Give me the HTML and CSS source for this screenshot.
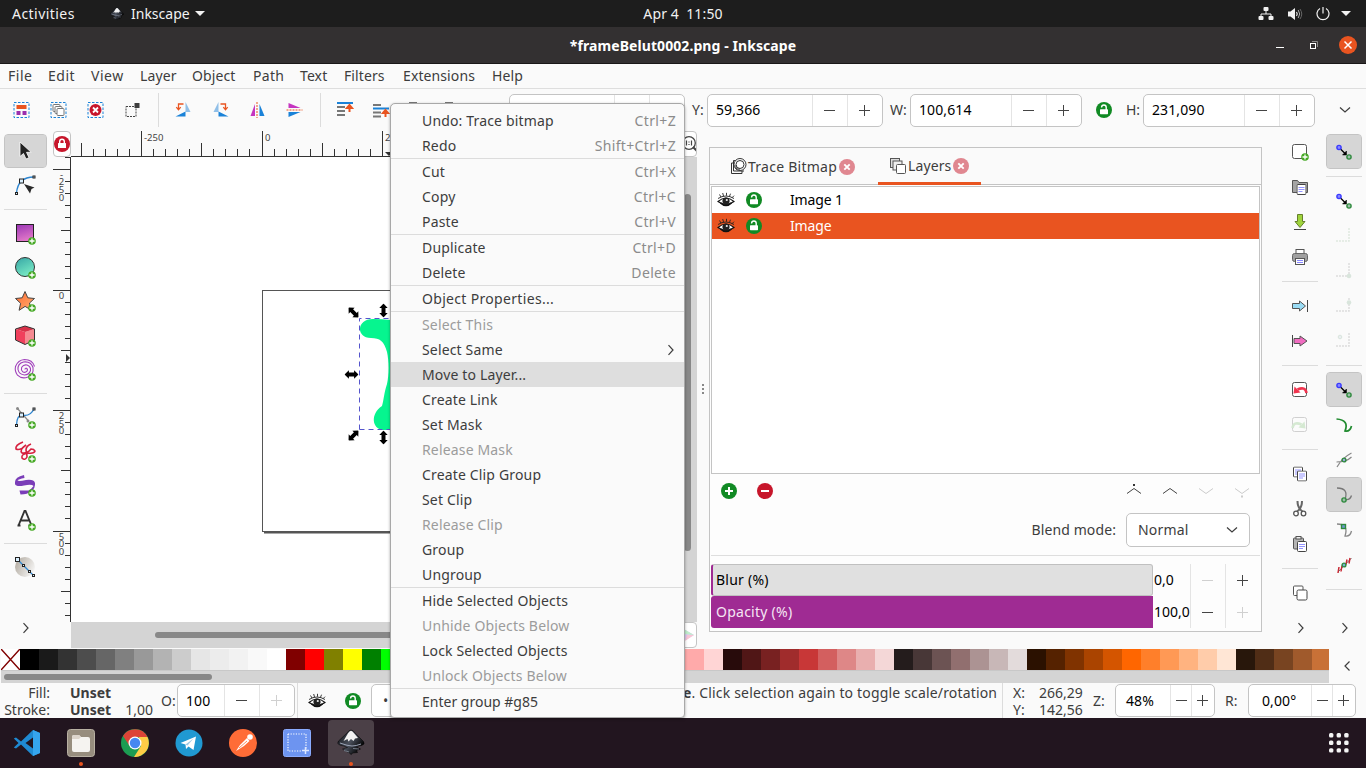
FILE: index.html
```
<!DOCTYPE html>
<html lang="en">
<head>
<meta charset="utf-8">
<title>*frameBelut0002.png - Inkscape</title>
<link rel="stylesheet" href="styles.css">
</head>
<body>
<svg class="defs" width="0" height="0">
  <defs>
    <linearGradient id="g-rect" x1="0" y1="0" x2="0.3" y2="1"><stop offset="0" stop-color="#9a35b5"/><stop offset="1" stop-color="#e077c8"/></linearGradient>
    <linearGradient id="g-circ" x1="0" y1="0" x2="0.5" y2="1"><stop offset="0" stop-color="#35a5a5"/><stop offset="1" stop-color="#77e8c4"/></linearGradient>
    <linearGradient id="g-star" x1="0" y1="0" x2="1" y2="1"><stop offset="0" stop-color="#ff6a33"/><stop offset="1" stop-color="#ffb070"/></linearGradient>
    <linearGradient id="g-grad" x1="0" y1="0.3" x2="1" y2="0.8"><stop offset="0" stop-color="#b5aea4"/><stop offset="1" stop-color="#fafafa"/></linearGradient>
    <linearGradient id="g-ink" x1="0" y1="0" x2="1" y2="0.6"><stop offset="0.1" stop-color="#15171c"/><stop offset="0.55" stop-color="#4a505c"/><stop offset="1" stop-color="#000"/></linearGradient>
    <symbol id="plus" viewBox="0 0 8 8"><circle cx="4" cy="4" r="3.8" fill="#45a824"/><path d="M4 1.5v5M1.5 4h5" stroke="#fff" stroke-width="1.3"/></symbol>
    <symbol id="lock-open" viewBox="0 0 16 16"><circle cx="8" cy="8" r="8" fill="#118a24"/><rect x="4" y="7.2" width="8" height="5" rx=".6" fill="#fff"/><path d="M5.6 5.6V5.3a2.3 2.3 0 0 1 4.6 0V8" fill="none" stroke="#fff" stroke-width="1.4"/></symbol>
    <symbol id="eye" viewBox="0 0 18 16"><path d="M1 9.5Q9 2.5 17 9.5Q9 15.5 1 9.5Z" fill="#fff" stroke="#111" stroke-width="1.1"/><circle cx="9" cy="9" r="3.6" fill="#222"/><circle cx="9.8" cy="8" r="1.1" fill="#eee"/><path d="M1 6.5Q9 1.5 17 6.5M4 5L2.5 2.5M6.5 4L5.7 1M9.5 3.7V.8M12.5 4.3l1-2.6M15 5.7l2-2" fill="none" stroke="#222" stroke-width=".9"/><path d="M3.5 10.8Q9 16 14.5 10.8" fill="none" stroke="#111" stroke-width="1.6"/></symbol>
    <symbol id="chev-r" viewBox="0 0 8 12"><path d="M1.5 1.2L6 6l-4.5 4.8" fill="none" stroke="#3d3d3d" stroke-width="1.2"/></symbol>
    <symbol id="chev-d" viewBox="0 0 12 8"><path d="M1 1.5L6 6l5-4.5" fill="none" stroke="#3d3d3d" stroke-width="1.2"/></symbol>
    <symbol id="snap" viewBox="0 0 18 18"><path d="M5.5 6l4.500 4.500" stroke="#000" stroke-width="1.200"/><path d="M11.500 8v4H7.500z" fill="#000" stroke="#000" stroke-width=".5"/><circle cx="4" cy="4.500" r="2.100" fill="#88f" stroke="#3a3aff" stroke-width="1.400"/><circle cx="14" cy="14" r="2.100" fill="#9cbfa8" stroke="#2f8a3e" stroke-width="1.400"/></symbol>
    <symbol id="doc" viewBox="0 0 18 18"><rect x="1.5" y="1.5" width="14" height="14" rx="2" fill="#fff" stroke="#555"/></symbol>
    <symbol id="page" viewBox="0 0 10 11"><rect x=".5" y=".5" width="9" height="10" rx="1" fill="#fff" stroke="#444"/><path d="M2 3.5h6M2 5.5h6M2 7.5h4" stroke="#88f" stroke-width=".9"/></symbol>
    <symbol id="handle" viewBox="-7 -7 14 14"><path d="M-7 0L-2.6-4.2V-2H2.6V-4.2L7 0 2.6 4.2V2H-2.6V4.2Z"/></symbol>
    <symbol id="inkscape" viewBox="0 0 28 28"><path d="M14 1q2 0 4 3l8.500 8.500q2 3-2 4-5 0-4 2l3 1.500-4 1.500 1 2-5 .5q-1 3-3 0l-3-1.500-4-2.500 5-1.500q-4-2-8-2.500-3-1.500-1-4L10 4q2-3 4-3z" fill="url(#g-ink)" stroke="#000" stroke-width=".5"/><path d="M14 1.800q1.500 0 3 2.500l4 4.700-3 .5-1.500 2.500-2.500-2-2.500 2.500-1-2.500-4 2L11 4.300q1.500-2.500 3-2.500z" fill="#f2f2f2"/><path d="M3 14q8 3 12 3t9-2" fill="none" stroke="#9aa3b5" stroke-width="1"/><path d="M7 21.500l5 1.500M16 19.500l6 .5" stroke="#8890a0" stroke-width=".8"/></symbol>
    <symbol id="close-x" viewBox="0 0 16 16"><circle cx="8" cy="8" r="8" fill="#e08790"/><path d="M5.300 5.300l5.400 5.400M10.700 5.300l-5.400 5.400" stroke="#fff" stroke-width="1.900"/></symbol>
  </defs>
</svg>

<header class="topbar">
  <span class="activities">Activities</span>
  <span class="app-menu"><svg width="14" height="14"><use href="#inkscape"/></svg><span>Inkscape</span><i class="tri"></i></span>
  <span class="clock">Apr 4&ensp;11:50</span>
  <span class="tray">
    <svg width="16" height="14" viewBox="0 0 16 14"><path d="M8 4v3M3 10V7h10v3" fill="none" stroke="#f2f2f2"/><rect x="5.500" y="0" width="5" height="4" rx="1" fill="#f2f2f2"/><rect x=".5" y="9" width="5" height="4" rx="1" fill="#f2f2f2"/><rect x="10.500" y="9" width="5" height="4" rx="1" fill="#f2f2f2"/></svg>
    <svg width="16" height="14" viewBox="0 0 16 14"><path d="M1 4.500h2.500L8 1v12L3.500 9.500H1z" fill="#f2f2f2"/><path d="M9.500 5q1.500 2 0 4" fill="none" stroke="#f2f2f2" stroke-width="1.200"/><path d="M11.200 3q3 4 0 8" fill="none" stroke="#aaa"/><path d="M13 2q3.500 5 0 10" fill="none" stroke="#666"/></svg>
    <svg width="14" height="14" viewBox="0 0 14 14"><path d="M4 1.500a6 6 0 1 0 6 0M7 0v6.500" fill="none" stroke="#f2f2f2" stroke-width="1.200"/></svg>
    <i class="tri"></i>
  </span>
</header>

<div class="titlebar">
  <b>*frameBelut0002.png - Inkscape</b>
  <span class="winbtns">
    <svg width="8" height="10" viewBox="0 0 8 10"><path d="M0 7.500h8" stroke="#fff"/></svg>
    <svg width="8" height="8" viewBox="0 0 8 8"><path d="M2 .5h5.500V6" fill="none" stroke="#8a8888"/><rect x=".5" y="2.500" width="5" height="5" fill="none" stroke="#fff"/></svg>
    <svg width="18" height="18" viewBox="0 0 18 18"><circle cx="9" cy="9" r="9" fill="#e95420"/><path d="M5.500 5.500l7 7M12.500 5.500l-7 7" stroke="#fff" stroke-width="1.500"/></svg>
  </span>
</div>

<nav class="menubar"><span class="m1">File</span><span class="m2">Edit</span><span class="m3">View</span><span class="m4">Layer</span><span class="m5">Object</span><span class="m6">Path</span><span class="m7">Text</span><span class="m8">Filters</span><span class="m9">Extensions</span><span class="m10">Help</span></nav>

<div class="toolbar">
  <div class="tgroup">
    <svg viewBox="0 0 16 16"><rect x=".5" y=".5" width="15" height="15" fill="none" stroke="#1a82d8" stroke-dasharray="2.500 1.500"/><rect x="3" y="3" width="10" height="4" fill="#e95420"/><rect x="3" y="9" width="4" height="4" fill="#9b2fae"/><rect x="9" y="9" width="4" height="4" fill="#9b2fae"/></svg>
    <svg viewBox="0 0 16 16"><rect x=".5" y=".5" width="15" height="15" fill="none" stroke="#1a82d8" stroke-dasharray="2.500 1.500"/><g fill="#fff" stroke="#777"><rect x="2.500" y="2.500" width="7" height="7" rx="1"/><rect x="4.500" y="4.500" width="7" height="7" rx="1"/><rect x="6.500" y="6.500" width="7" height="7" rx="1"/></g></svg>
    <svg viewBox="0 0 16 16"><rect x=".5" y=".5" width="15" height="15" fill="none" stroke="#1a82d8" stroke-dasharray="2.500 1.500"/><circle cx="8" cy="8" r="6" fill="#c7162b"/><path d="M5.500 5.500l5 5M10.500 5.500l-5 5" stroke="#fff" stroke-width="1.800"/></svg>
    <svg viewBox="0 0 16 16"><rect x="1.500" y="4.500" width="10" height="10" fill="none" stroke="#444" stroke-dasharray="2 1"/><rect x="10" y="1" width="5" height="5" fill="#3d3d3d"/></svg>
  </div>
  <i class="vsep"></i>
  <div class="tgroup">
    <svg viewBox="0 0 16 16"><path d="M10 0l5 10h-5z" fill="#90bfe8"/><path d="M0 14.500h10v-5z" fill="#1a82d8"/><path d="M8 2H3v5M.8 5.200L3 7.800l2.200-2.600" fill="none" stroke="#e95420" stroke-width="1.300"/></svg>
    <svg viewBox="0 0 16 16"><path d="M6 0L1 10h5z" fill="#90bfe8"/><path d="M16 14.500H6v-5z" fill="#1a82d8"/><path d="M8 2h5v5M10.800 5.200L13 7.800l2.200-2.600" fill="none" stroke="#e95420" stroke-width="1.300"/></svg>
    <svg viewBox="0 0 16 16"><path d="M5.500 2v12H1z" fill="#c535c0"/><path d="M10 2v12h5z" fill="#1a82d8"/><path d="M7.500 0v16" stroke="#e95420" stroke-dasharray="2 1"/></svg>
    <svg viewBox="0 0 16 16"><path d="M2 1v5h12z" fill="#c535c0"/><path d="M2 15v-5h12z" fill="#1a82d8"/><path d="M0 8h16" stroke="#e95420" stroke-dasharray="2 1"/></svg>
  </div>
  <i class="vsep"></i>
  <div class="tgroup narrow">
    <svg viewBox="0 0 16 16"><path d="M0 1h16" stroke="#1a82d8" stroke-width="2"/><path d="M0 5h8M0 9h8M0 13h8" stroke="#777" stroke-width="1.800"/><path d="M12.500 10V3.500M10 6l2.500-3L15 6z" fill="#e95420" stroke="#e95420" stroke-width="2"/></svg>
    <svg viewBox="0 0 16 16"><path d="M0 6.500h16" stroke="#1a82d8" stroke-width="2"/><path d="M0 3h8M0 10.500h8M0 14.500h8" stroke="#777" stroke-width="1.800"/><path d="M12.500 15V9M10 11l2.500-3L15 11z" fill="#e95420" stroke="#e95420" stroke-width="2"/></svg>
    <svg viewBox="0 0 16 16"><path d="M0 1h8M0 5h8" stroke="#777" stroke-width="1.800"/><path d="M12.500 1v8" stroke="#e95420" stroke-width="2"/></svg>
    <svg viewBox="0 0 16 16"><path d="M0 1h8M0 5h8" stroke="#777" stroke-width="1.800"/><path d="M0 14h16" stroke="#1a82d8" stroke-width="2"/></svg>
  </div>
  <div class="spin wide x"><span></span><i class="minus"></i><i class="plus"></i></div>
  <label class="ly">Y:</label>
  <div class="spin wide"><span>59,366</span><i class="minus"></i><i class="plus"></i></div>
  <label class="lw">W:</label>
  <div class="spin"><span>100,614</span><i class="minus"></i><i class="plus"></i></div>
  <svg class="lk" width="16" height="16"><use href="#lock-open"/></svg>
  <label class="lh">H:</label>
  <div class="spin"><span>231,090</span><i class="minus"></i><i class="plus"></i></div>
  <svg class="more" width="12" height="8"><use href="#chev-d"/></svg>
</div>

<main class="work">
  <div class="col tools">
    <div class="cell on"><svg viewBox="0 0 24 24"><path d="M7 3v14.500l3.500-3 2.500 5.500 3-1.300-2.500-5.400h4.700z" fill="#222" stroke="#fff" stroke-width=".8"/></svg></div>
    <div class="cell"><svg viewBox="0 0 24 24"><path d="M3.500 20Q5 4 21 4" fill="none" stroke="#2f86d0" stroke-width="1.300"/><path d="M11 11l10.500 3.500-3 1.500-1.500 4.500z" fill="#2a2a2a"/><g fill="#d8efff" stroke="#222"><rect x="6.500" y="6" width="4" height="4"/><rect x="20" y="3" width="2" height="2"/><rect x="2.500" y="19.500" width="2" height="2"/></g></svg></div>
    <i class="hsep"></i>
    <div class="cell"><svg viewBox="0 0 24 24"><rect x="3.500" y="3.500" width="17" height="17" fill="url(#g-rect)" stroke="#222"/><use href="#plus" x="15" y="16" width="8" height="8"/></svg></div>
    <div class="cell"><svg viewBox="0 0 24 24"><circle cx="12" cy="12" r="9.500" fill="url(#g-circ)" stroke="#333"/><use href="#plus" x="15" y="16" width="8" height="8"/></svg></div>
    <div class="cell"><svg viewBox="0 0 24 24"><path d="M12 2.500l2.800 6.300 6.700.7-5 4.500 1.600 7-6-3.600-6 3.900 1.500-7-5.100-4.800 6.700-.7z" fill="url(#g-star)" stroke="#444"/><use href="#plus" x="15" y="15" width="8" height="8"/></svg></div>
    <div class="cell"><svg viewBox="0 0 24 24"><path d="M2.500 6L12 9v12.500L2.500 17z" fill="#f0405c"/><path d="M12 9l9.500-3v11L12 21.500z" fill="#f58a92"/><path d="M2.500 6L12 3l9.500 3L12 9z" fill="#d83048"/><path d="M2.500 6L12 3l9.500 3v11L12 21.500 2.500 17z" fill="none" stroke="#333"/><use href="#plus" x="15" y="16" width="8" height="8"/></svg></div>
    <div class="cell"><svg viewBox="0 0 24 24"><path d="M12 12.500q0-1.700 1.500-1.200 1.600 1 .5 2.900-2 2-4.300.5-2-2-1-4.500 2-3 5.300-2.200 4 1.500 3.500 5.500-1.500 4.500-6 4.500-5.500-.5-6.500-5.500Q4.500 6.500 10.500 5q7.500-1 9.500 5.500 1 7-5 9.500-6 2.500-10.500-1.800Q1.500 14 2.500 9.500 5 3 11.500 2.500q8 0 10 7" fill="none" stroke="#a040bb" stroke-width="1.100"/><use href="#plus" x="15" y="16" width="8" height="8"/></svg></div>
    <i class="hsep"></i>
    <div class="cell"><svg viewBox="0 0 24 24"><path d="M4.500 3.500l11 12.500" stroke="#888" stroke-width="1.200"/><circle cx="4.500" cy="3.500" r="1.500" fill="#888"/><circle cx="15" cy="16" r="1.500" fill="#888"/><path d="M3.500 20Q4 10 9 10q8 2 12-6" fill="none" stroke="#2f86d0" stroke-width="1.300"/><g fill="#d8efff" stroke="#222"><rect x="6.500" y="8" width="4" height="4"/><rect x="20" y="3" width="2" height="2"/><rect x="2.500" y="19.500" width="2" height="2"/></g><use href="#plus" x="15" y="16" width="8" height="8"/></svg></div>
    <div class="cell"><svg viewBox="0 0 24 24"><path d="M10 3Q2 6 3 10q4 2 10-4-7 5-4 8 5 1 9-4 3 0 4 2-1 3-7 2-7 1-6 5 3 3 5-1 0-3-1-7 0-4 5-6" fill="none" stroke="#d6213f" stroke-width="1.600"/><use href="#plus" x="15" y="16" width="8" height="8"/></svg></div>
    <div class="cell"><svg viewBox="0 0 24 24"><path d="M11 2Q2 4 2 9v2q1 3 9 1.500 8-1.500 9.500.5-2 3-5 4.500H6.500l1 4q7 0 11-3.500 4-3 3.500-8-1-4-9-3-7 1.500-8.500.5 1-1.500 7-2.500z" fill="#7a3db8"/><use href="#plus" x="15" y="16" width="8" height="8"/></svg></div>
    <div class="cell"><svg viewBox="0 0 24 24"><path d="M5.500 18.500L11.500 4h1l6 14.500M8 13.500h8M4.500 18.500h3M15.500 18.500h4" fill="none" stroke="#333" stroke-width="1.900"/><use href="#plus" x="15" y="16" width="8" height="8"/></svg></div>
    <i class="hsep"></i>
    <div class="cell"><svg viewBox="0 0 24 24"><circle cx="12" cy="12" r="10" fill="url(#g-grad)"/><path d="M4.500 4.500l16 16" stroke="#2f86d0" stroke-width="1.300"/><g fill="#d8efff" stroke="#222"><rect x="2.500" y="2.500" width="4" height="4"/><rect x="9.500" y="9.500" width="2" height="2"/><rect x="15.500" y="15.500" width="2" height="2"/><rect x="19.500" y="19.500" width="2" height="2"/></g></svg></div>
    <svg class="end" width="8" height="12"><use href="#chev-r"/></svg>
  </div>

  <section class="canvas">
    <div class="corner tl"><svg width="16" height="16" viewBox="0 0 16 16"><circle cx="8" cy="8" r="8" fill="#c7162b"/><rect x="4" y="7" width="8" height="5" rx=".6" fill="#fff"/><path d="M5.700 8V5.500a2.300 2.300 0 0 1 4.600 0V8" fill="none" stroke="#fff" stroke-width="1.400"/></svg></div>
    <svg class="hruler" width="609" height="26" viewBox="71 131 609 26"><g id="hticks" fill="#333"></g><path d="M71 156.500h609" stroke="#333"/><text x="144" y="141">-250</text><text x="265" y="141">0</text><text x="385" y="141">250</text><path d="M385 152h8l-4 4z" fill="#333"/></svg>
    <div class="corner"><svg width="18" height="20" viewBox="0 0 18 20"><circle cx="9" cy="9" r="6.300" fill="#fff" stroke="#444" stroke-width="1.300"/><path d="M6.500 6.500v5M11.500 6.500v5M9 7.500v1M9 10v1" stroke="#444" stroke-width="1.200"/><path d="M13 13l4 4" stroke="#444" stroke-width="2"/></svg></div>
    <svg class="vruler" width="18" height="465" viewBox="53 157 18 465"><g id="vticks" fill="#333"></g><path d="M70.500 157v465" stroke="#333"/><g text-anchor="middle"><text x="61.500" y="178">-</text><text x="61.500" y="185">2</text><text x="61.500" y="193">5</text><text x="61.500" y="201">0</text><text x="61.500" y="299">0</text><text x="61.500" y="419">2</text><text x="61.500" y="427">5</text><text x="61.500" y="434">0</text><text x="61.500" y="540">5</text><text x="61.500" y="547">0</text><text x="61.500" y="555">0</text></g><path d="M66 354v8l4-4z" fill="#333"/></svg>
    <svg class="sheet" width="609" height="465" viewBox="71 157 609 465">
      <rect x="71" y="157" width="609" height="465" fill="#fff"/>
      <path d="M264 532.500h400" stroke="#555" stroke-width="2"/><rect x="262.500" y="290.500" width="400" height="241" fill="#fff" stroke="#555"/>
      <path d="M373 319c-17 0-17 19-2 19 9 0 13 3 16 14 2 9 2 23 0 32-3 9-3 15-5 22-12 8-10 23 1 24h27V323q-20-4-37-4z" fill="#06f58f"/>
      <path d="M359.500 429.500v-111H400M359.500 429.500H400" fill="none" stroke="#5555cc" stroke-dasharray="5 4"/>
      <g fill="#000"><use href="#handle" x="-7" y="-7" width="14" height="14" transform="translate(353.500 312.500) rotate(45)"/><use href="#handle" x="-7" y="-7" width="14" height="14" transform="translate(383.500 310.500) rotate(90)"/><use href="#handle" x="-7" y="-7" width="14" height="14" transform="translate(351.500 374.500)"/><use href="#handle" x="-7" y="-7" width="14" height="14" transform="translate(353.500 435.500) rotate(-45)"/><use href="#handle" x="-7" y="-7" width="14" height="14" transform="translate(383.500 437.500) rotate(90)"/></g>
    </svg>
    <div class="vscroll"><i></i></div>
    <div></div>
    <div class="hscroll"><i></i></div>
    <div class="corner br"><svg width="16" height="18" viewBox="0 0 16 18"><path d="M1 2l12 7-12 7z" fill="#dcc8f5"/><path d="M1 2l12 7-10-1z" fill="#bfeecb"/><path d="M13 9L4 15l2-6z" fill="#f8c5d5"/></svg></div>
  </section>

  <div class="grip"><i></i><i></i><i></i></div>

  <section class="panel">
    <div class="tabs">
      <span class="tab t1"><svg width="17" height="17" viewBox="0 0 17 17"><path d="M4 5H1.500v10.500H12V13M6 2.500H3.500v10.500H14" fill="none" stroke="#333"/><circle cx="10" cy="6.500" r="6" fill="#fff" stroke="#333"/><circle cx="10" cy="6.500" r="4" fill="#fff" stroke="#333"/><path d="M6 7v4h4" fill="none" stroke="#333"/></svg><span>Trace Bitmap</span><svg width="16" height="16"><use href="#close-x"/></svg></span>
      <span class="tab t2"><svg width="17" height="17" viewBox="0 0 17 17"><g stroke="#555"><rect x=".5" y=".5" width="9" height="9" fill="#ddd"/><rect x="3" y="3" width="9" height="9" fill="#eee"/><rect x="6.500" y="6.500" width="9" height="9" rx="1" fill="#fff"/></g></svg><span>Layers</span><svg width="16" height="16"><use href="#close-x"/></svg></span>
    </div>
    <div class="list">
      <div class="row"><svg width="18" height="16"><use href="#eye"/></svg><svg width="16" height="16"><use href="#lock-open"/></svg><span>Image 1</span></div>
      <div class="row sel"><svg width="18" height="16"><use href="#eye"/></svg><svg width="16" height="16"><use href="#lock-open"/></svg><span>Image</span></div>
    </div>
    <div class="actions">
      <svg width="16" height="16" viewBox="0 0 16 16"><circle cx="8" cy="8" r="8" fill="#118a24"/><path d="M8 4v8M4 8h8" stroke="#fff" stroke-width="2"/></svg>
      <svg width="16" height="16" viewBox="0 0 16 16"><circle cx="8" cy="8" r="8" fill="#c7162b"/><path d="M4 8h8" stroke="#fff" stroke-width="2"/></svg>
      <svg class="first" width="16" height="16" viewBox="0 0 16 16"><path d="M1 10.500l7-5 7 5" fill="none" stroke="#444"/><rect x="7" y="1" width="2" height="2" fill="#333"/></svg>
      <svg width="16" height="16" viewBox="0 0 16 16"><path d="M1 10.500l7-5 7 5" fill="none" stroke="#444"/></svg>
      <svg width="16" height="16" viewBox="0 0 16 16"><path d="M1 5.500l7 5 7-5" fill="none" stroke="#ccc"/></svg>
      <svg width="16" height="16" viewBox="0 0 16 16"><path d="M1 5.500l7 5 7-5" fill="none" stroke="#ccc"/><rect x="7" y="12.500" width="2" height="2" fill="#ccc"/></svg>
    </div>
    <div class="blend"><label>Blend mode:</label><div class="combo"><span>Normal</span><svg width="12" height="8"><use href="#chev-d"/></svg></div></div>
    <div class="sliders">
      <div class="slide"><div class="bar blur">Blur (%)</div><span>0,0</span><i class="minus off"></i><i class="plus"></i></div>
      <div class="slide"><div class="bar full">Opacity (%)</div><span>100,0</span><i class="minus"></i><i class="plus off"></i></div>
    </div>
  </section>

  <div class="col cmds">
    <div class="cell"><svg viewBox="0 0 18 18"><use href="#doc" width="18" height="18"/><use href="#plus" x="10" y="10" width="8" height="8"/></svg></div>
    <div class="cell"><svg viewBox="0 0 18 18"><path d="M1.500 14.500v-12h5l1.500 2h8.500v10z" fill="#a5a5a5" stroke="#555"/><use href="#page" x="5.500" y="6" width="10" height="11"/></svg></div>
    <div class="cell"><svg viewBox="0 0 18 18"><path d="M6.500 1.500h5v7h2.500L9 14.500 4 8.500h2.500z" fill="#9fd43c" stroke="#66802c"/><path d="M3 16.500h12" stroke="#444"/></svg></div>
    <div class="cell"><svg viewBox="0 0 18 18"><rect x="5" y="1.500" width="8" height="6" fill="#fff" stroke="#555"/><rect x="1.500" y="5.500" width="15" height="8" rx="2" fill="#a0a0a0" stroke="#666"/><rect x="4.500" y="10.500" width="9" height="6" fill="#fff" stroke="#555"/><path d="M6 12.500h6M6 14.500h6" stroke="#88f"/></svg></div>
    <i class="hsep"></i>
    <div class="cell"><svg viewBox="0 0 18 18"><path d="M1.500 6.500h7V4l6 5-6 5v-2.500h-7z" fill="#9adcf5" stroke="#555"/><path d="M16.500 3v12" stroke="#444"/></svg></div>
    <div class="cell"><svg viewBox="0 0 18 18"><path d="M3 6.500h6V4l7 5-7 5v-2.500H3z" fill="#f06cc0" stroke="#555"/><path d="M1.500 3v12" stroke="#444"/></svg></div>
    <i class="hsep"></i>
    <div class="cell"><svg viewBox="0 0 18 18"><use href="#doc" width="18" height="18"/><path d="M15.500 12q-1-7-9-3.500" fill="none" stroke="#f0344e" stroke-width="2.600"/><path d="M2.500 12.500l1-7 6 6z" fill="#f0344e"/></svg></div>
    <div class="cell faded"><svg viewBox="0 0 18 18"><use href="#doc" width="18" height="18"/><path d="M1.500 12q1-7 9-3.500" fill="none" stroke="#6cb860" stroke-width="2.600"/><path d="M14.500 12.500l-1-7-6 6z" fill="#6cb860"/></svg></div>
    <i class="hsep"></i>
    <div class="cell"><svg viewBox="0 0 18 18"><use href="#page" x="2" y="1.500" width="10" height="11"/><use href="#page" x="6" y="5.500" width="10" height="11"/></svg></div>
    <div class="cell"><svg viewBox="0 0 18 18"><path d="M6.500 1q0 7 5 10.500M11 1q0 7-5 10.500" fill="none" stroke="#666" stroke-width="2"/><circle cx="5" cy="13.500" r="2.300" fill="#fff" stroke="#555" stroke-width="1.300"/><circle cx="12.500" cy="13.500" r="2.300" fill="#fff" stroke="#555" stroke-width="1.300"/></svg></div>
    <div class="cell"><svg viewBox="0 0 18 18"><rect x="2.500" y="3" width="10" height="11" rx="1" fill="#b5b5b5" stroke="#555"/><rect x="5" y="1.500" width="5" height="2.500" fill="#eee" stroke="#555"/><use href="#page" x="6" y="6" width="10" height="11"/></svg></div>
    <i class="hsep"></i>
    <div class="cell"><svg viewBox="0 0 18 18"><rect x="2.500" y="2" width="9.500" height="9.500" rx="1" fill="#fff" stroke="#555"/><rect x="6" y="6" width="10" height="10" rx="1.500" fill="#fff" stroke="#444"/></svg></div>
    <svg class="end" width="8" height="12"><use href="#chev-r"/></svg>
  </div>

  <div class="col snaps">
    <div class="cell on"><svg><use href="#snap"/></svg></div>
    <i class="hsep"></i>
    <div class="cell"><svg><use href="#snap"/></svg></div>
    <div class="cell faded"><svg viewBox="0 0 18 18"><path d="M14 1v13H1" fill="none" stroke="#95b895" stroke-width="1.500" stroke-dasharray="2 1"/></svg></div>
    <div class="cell faded"><svg viewBox="0 0 18 18"><path d="M14 1v13H1" fill="none" stroke="#888" stroke-width="1.500" stroke-dasharray="2 1"/><circle cx="14" cy="14" r="2.300" fill="#79a987"/></svg></div>
    <div class="cell faded"><svg viewBox="0 0 18 18"><path d="M14 1v13H1" fill="none" stroke="#888" stroke-width="1.500" stroke-dasharray="2 1"/><circle cx="14" cy="5.500" r="2.300" fill="#79a987"/></svg></div>
    <div class="cell faded"><svg viewBox="0 0 18 18"><path d="M14 1v13H1" fill="none" stroke="#888" stroke-width="1.500" stroke-dasharray="2 1"/><circle cx="5" cy="5" r="1.800" fill="#bcd" stroke="#79a987"/></svg></div>
    <i class="hsep"></i>
    <div class="cell on"><svg><use href="#snap"/></svg></div>
    <div class="cell"><svg viewBox="0 0 18 18"><path d="M1.500 3q13 1 8.500 12 5 1 6.500-5" fill="none" stroke="#1f8a2e" stroke-width="1.700"/></svg></div>
    <div class="cell"><svg viewBox="0 0 18 18"><path d="M2 16Q7 7 16.500 2M1.500 11q10 0 15-5" fill="none" stroke="#888" stroke-width="1.200"/><circle cx="9" cy="9" r="1.900" fill="#9ad" stroke="#2f8a3e" stroke-width="1.400"/></svg></div>
    <div class="cell on"><svg viewBox="0 0 18 18"><path d="M2 2q12 0 8 11.500 5 1 6.500-4" fill="none" stroke="#777" stroke-width="1.300"/><circle cx="9" cy="14" r="2.100" fill="#9cbfa8" stroke="#2f8a3e" stroke-width="1.400"/></svg></div>
    <div class="cell"><svg viewBox="0 0 18 18"><path d="M2 3q12 0 8 12 5 1 6.500-5" fill="none" stroke="#888" stroke-width="1.300"/><rect x="6.500" y="3.500" width="4" height="4" fill="#6a9ad0" stroke="#2f8a3e" stroke-width="1.400"/></svg></div>
    <div class="cell"><svg viewBox="0 0 18 18"><path d="M3 16L16.500 2" stroke="#777"/><path d="M4 11l-1 6M7 9.500l-1 6M12 3.500l-1 5M15 2l-1 5.500" stroke="#c82a35" stroke-width="1.500"/><circle cx="9" cy="9" r="1.900" fill="#7ab0d8" stroke="#2f8a3e" stroke-width="1.400"/></svg></div>
    <i class="hsep"></i>
    <svg class="end" width="8" height="12"><use href="#chev-r"/></svg>
  </div>
</main>

<div class="palette">
  <div class="palwrap">
    <div class="swatches" id="swatches"><svg width="19" height="21" viewBox="0 0 19 21"><rect width="19" height="21" fill="#fff"/><path d="M0 0l19 21M19 0L0 21" stroke="#800000" stroke-width="1.500"/></svg></div>
    <div class="palscroll"><i></i></div>
  </div>
  <svg class="palchev" width="8" height="12" viewBox="0 0 8 12"><path d="M6.500 1.500L2 6l4.500 4.500" fill="none" stroke="#3d3d3d" stroke-width="1.200"/></svg>
</div>

<footer class="status">
  <div class="pair lab"><span>Fill:</span><span>Stroke:</span></div>
  <div class="pair val"><b>Unset</b><b>Unset</b></div>
  <div class="pair sw"><span>&nbsp;</span><span>1,00</span></div>
  <label class="lo">O:</label>
  <div class="spin so"><span>100</span><i class="minus"></i><i class="plus off"></i></div>
  <i class="ssep"></i>
  <svg class="seye" width="18" height="16"><use href="#eye"/></svg>
  <svg class="slock" width="16" height="16"><use href="#lock-open"/></svg>
  <div class="layersel">•</div>
  <div class="msg"><b>e</b>. Click selection again to toggle scale/rotation</div>
  <i class="ssep s2"></i>
  <div class="pair xy"><span>X:</span><span>Y:</span></div>
  <div class="pair xyv"><span>266,29</span><span>142,56</span></div>
  <label class="lz">Z:</label>
  <div class="spin sz"><span>48%</span><i class="minus"></i><i class="plus"></i></div>
  <label class="lr">R:</label>
  <div class="spin sr"><span>0,00°</span><i class="minus"></i><i class="plus"></i></div>
</footer>

<div class="dock">
  <div class="app"><svg viewBox="0 0 28 28"><path d="M20 1l7 3v20l-7 3L8 15.500 3 19.500.800 18.500 5.500 14 .8 9.500 3 8.500l5 4zM20 8.500L12.500 14l7.500 5.500z" fill="#1f8ad2" fill-rule="evenodd"/><path d="M20 1l7 3v20l-7 3z" fill="#35a5ee"/></svg></div>
  <div class="app run"><svg viewBox="0 0 28 28"><rect x=".5" y=".5" width="27" height="27" rx="3" fill="#978d7e" stroke="#b8b0a2"/><path d="M5 8q0-2 2-2h5l2 2h7q2 0 2 2v11q0 2-2 2H7q-2 0-2-2z" fill="#f5f3f0"/><path d="M5 8q0-2 2-2h5l2 2-2 2H5z" fill="#ddd5cc"/></svg></div>
  <div class="app"><svg viewBox="0 0 28 28"><circle cx="14" cy="14" r="14" fill="#1c9c52"/><path d="M2 7A14 14 0 0 1 26.500 8H14l-6 8z" fill="#dc4437"/><path d="M26.500 8A14 14 0 0 1 13 28l7-11-2-9z" fill="#ffcd46"/><circle cx="14" cy="14" r="6.500" fill="#fff"/><circle cx="14" cy="14" r="5.200" fill="#4688f1"/></svg></div>
  <div class="app"><svg viewBox="0 0 28 28"><circle cx="14" cy="14" r="13.500" fill="#2099d2"/><path d="M5.500 14L21 7.500 18.500 21l-5-3.500-2.500 2.500-.5-4.500z" fill="#fff"/><path d="M10.500 15.500l8-6-6 7z" fill="#9cc9e5"/></svg></div>
  <div class="app"><svg viewBox="0 0 28 28"><circle cx="14" cy="14" r="14" fill="#ff6c37"/><circle cx="21" cy="8" r="2.800" fill="#fff"/><path d="M18 9l2.500 3-5.500 5L7 22l4-6z" fill="#fff"/><path d="M10 19l8-7" stroke="#ff6c37" stroke-width=".8"/></svg></div>
  <div class="app"><svg viewBox="0 0 28 28"><rect x=".5" y=".5" width="27" height="27" rx="2" fill="#6d94f0" stroke="#8aabff"/><path d="M5 5h18v15M5 5v17h14" fill="none" stroke="#fff" stroke-width="1.200" stroke-dasharray="1.200 1.400"/><path d="M22.500 18v7M19 21.500h7" stroke="#dfe8ff" stroke-width="1.500"/></svg></div>
  <div class="app run active"><svg viewBox="0 0 28 28"><use href="#inkscape" width="28" height="28"/></svg></div>
  <svg class="grid" width="20" height="20" viewBox="0 0 20 20"><g fill="#f4f4f4"><rect x="0" y="0" width="4.400" height="4.400" rx="1.500"/><rect x="7.600" y="0" width="4.400" height="4.400" rx="1.500"/><rect x="15.200" y="0" width="4.400" height="4.400" rx="1.500"/><rect x="0" y="7.600" width="4.400" height="4.400" rx="1.500"/><rect x="7.600" y="7.600" width="4.400" height="4.400" rx="1.500"/><rect x="15.200" y="7.600" width="4.400" height="4.400" rx="1.500"/><rect x="0" y="15.200" width="4.400" height="4.400" rx="1.500"/><rect x="7.600" y="15.200" width="4.400" height="4.400" rx="1.500"/><rect x="15.200" y="15.200" width="4.400" height="4.400" rx="1.500"/></g></svg>
</div>

<div class="ctx">
  <div class="mi"><span>Undo: Trace bitmap</span><kbd>Ctrl+Z</kbd></div>
  <div class="mi"><span>Redo</span><kbd>Shift+Ctrl+Z</kbd></div>
  <hr>
  <div class="mi"><span>Cut</span><kbd>Ctrl+X</kbd></div>
  <div class="mi"><span>Copy</span><kbd>Ctrl+C</kbd></div>
  <div class="mi"><span>Paste</span><kbd>Ctrl+V</kbd></div>
  <hr>
  <div class="mi"><span>Duplicate</span><kbd>Ctrl+D</kbd></div>
  <div class="mi"><span>Delete</span><kbd>Delete</kbd></div>
  <hr>
  <div class="mi wider"><span>Object Properties...</span></div>
  <hr>
  <div class="mi dis"><span>Select This</span></div>
  <div class="mi"><span>Select Same</span><svg width="8" height="12"><use href="#chev-r"/></svg></div>
  <div class="mi hot"><span>Move to Layer...</span></div>
  <div class="mi"><span>Create Link</span></div>
  <div class="mi"><span>Set Mask</span></div>
  <div class="mi dis"><span>Release Mask</span></div>
  <div class="mi"><span>Create Clip Group</span></div>
  <div class="mi"><span>Set Clip</span></div>
  <div class="mi dis"><span>Release Clip</span></div>
  <div class="mi"><span>Group</span></div>
  <div class="mi"><span>Ungroup</span></div>
  <hr>
  <div class="mi"><span>Hide Selected Objects</span></div>
  <div class="mi dis"><span>Unhide Objects Below</span></div>
  <div class="mi"><span>Lock Selected Objects</span></div>
  <div class="mi dis"><span>Unlock Objects Below</span></div>
  <hr>
  <div class="mi tight"><span>Enter group #g85</span></div>
</div>
<script src="app.js"></script>
</body>
</html>
```

FILE: styles.css
```
* { box-sizing: border-box; }
body { margin: 0; width: 1366px; height: 768px; overflow: hidden; display: flex; flex-direction: column; background: #fafafa; color: #3d3d3d; font: 14px/18px "Noto Sans", "Open Sans", sans-serif; position: relative; }
svg { display: block; flex: none; }
.defs { position: absolute; }

.topbar { height: 27px; flex: none; background: #1d1d1d; color: #f2f2f2; display: grid; grid-template-columns: 110px 1fr auto 1fr 110px; align-items: center; }
.activities { padding-left: 12px; letter-spacing: .45px; }
.app-menu { display: flex; align-items: center; gap: 7px; }
.tri { width: 0; height: 0; border: 5px solid transparent; border-top-color: #f2f2f2; border-bottom: 0; }
.app-menu .tri { margin-left: -2px; }
.clock { grid-column: 3; letter-spacing: .15px; }
.tray { grid-column: 5; display: flex; align-items: center; gap: 13px; padding-left: 2px; }
.tray .tri { margin-left: -2px; }

.titlebar { height: 37px; flex: none; background: #333031; border-bottom: 1px solid #1a1718; color: #fff; display: grid; grid-template-columns: 1fr auto 1fr; align-items: center; }
.titlebar b { grid-column: 2; letter-spacing: 0.08px; padding-top: 1px; }
.winbtns { display: flex; align-items: center; justify-content: flex-end; padding-right: 9px; gap: 21px; }
.winbtns svg:first-child { margin-right: 5px; }

.menubar { height: 25px; flex: none; border-bottom: 1px solid #dedede; display: flex; align-items: center; padding-left: 8px; letter-spacing: .1px; }
.menubar span { white-space: nowrap; }
.m1 { width: 40px; letter-spacing: .5px; } .m2 { width: 43px; letter-spacing: .5px; } .m3 { width: 49px; letter-spacing: .5px; } .m4 { width: 52px; } .m5 { width: 61px; } .m6 { width: 47px; letter-spacing: .3px; } .m7 { width: 44px; } .m8 { width: 59px; } .m9 { width: 89px; }

.toolbar { height: 42px; flex: none; display: flex; align-items: center; padding-left: 3px; }
.tgroup { display: flex; }
.tgroup + .vsep + .tgroup { margin-left: -1px; }
.tgroup svg { width: 37px; height: 16px; }
.tgroup.narrow svg { width: 36px; }
.vsep { width: 1px; height: 34px; background: #dcdcdc; margin: 0 7px; }
.spin { height: 33px; width: 172px; flex: none; background: #fff; border: 1px solid #c4c4c4; border-radius: 5px; display: flex; align-items: center; color: #000; }
.spin.wide { width: 176px; }
.spin span { flex: 1; padding-left: 8px; letter-spacing: .1px; }
.minus, .plus { width: 35px; height: 100%; flex: none; border-left: 1px solid #e4e4e4; background: linear-gradient(#444, #444) 11px 50% / 11px 1px no-repeat; }
.plus { background: linear-gradient(#444, #444) 11px 50% / 11px 1px no-repeat, linear-gradient(#444, #444) 16px 50% / 1px 11px no-repeat; }
.off { background-image: linear-gradient(#d0d0d0, #d0d0d0), linear-gradient(#d0d0d0, #d0d0d0); }
.minus.off { background-image: linear-gradient(#d0d0d0, #d0d0d0); }
.spin.x { margin-left: 38px; }
.ly { width: 22px; padding-left: 7px; }
.lw { width: 27px; padding-left: 7px; }
.lk { margin-left: 14px; }
.lh { width: 31px; padding-left: 14px; }
.more { margin-left: 24px; }

.work { height: 518px; flex: none; display: flex; }
.col { display: flex; flex-direction: column; align-items: center; height: 518px; padding-top: 3px; }
.cell { height: 35px; width: 36px; flex: none; display: flex; align-items: center; justify-content: center; }
.cell svg { width: 18px; height: 18px; }
.on { background: #d6d6d6; border: 1px solid #c4c4c4; border-radius: 4px; background-clip: padding-box; }
.faded { opacity: .25; }
.hsep { width: 36px; height: 14px; flex: none; background: linear-gradient(#dcdcdc, #dcdcdc) center / 100% 1px no-repeat; }
.end { margin: auto 0 15px; position: relative; left: 1px; }
.tools { width: 53px; padding-right: 3px; }
.tools .cell { height: 34px; width: 43px; }
.tools .cell svg { width: 24px; height: 24px; }
.tools .hsep { width: 43px; }
.cmds { width: 36px; margin-left: 20px; }
.snaps { width: 36px; margin-left: 8px; }

.canvas { width: 644px; height: 517px; flex: none; display: grid; grid-template: 26px 465px 26px / 18px 609px 17px; }
.canvas text { font: 9.500px "Noto Sans", sans-serif; fill: #444; }
.corner { border: 1px solid #c4c4c4; border-radius: 4px; background: #fff; display: flex; align-items: center; justify-content: center; overflow: hidden; }
.vscroll { background: #d4d4d4; display: flex; padding: 37px 0 0 4px; }
.vscroll i { width: 7px; height: 357px; border-radius: 4px; background: #888; }
.hscroll { background: #d4d4d4; padding: 10px 0 0 84px; }
.hscroll i { display: block; width: 420px; height: 6px; border-radius: 3px; background: #888; }

.grip { width: 12px; flex: none; display: flex; flex-direction: column; align-items: center; justify-content: center; gap: 2px; padding-bottom: 2px; }
.grip i { width: 2px; height: 2px; background: #888; }

.panel { width: 553px; height: 485px; flex: none; margin-top: 16px; border: 1px solid #c4c4c4; background: #fdfdfd; display: flex; flex-direction: column; }
.tabs { height: 37px; flex: none; display: flex; background: #fafafa; border-bottom: 1px solid #c4c4c4; }
.tab { display: flex; align-items: center; height: 37px; }
.tab span { margin: 0 2px 0 1px; letter-spacing: .25px; }
.t1 { padding-left: 20px; width: 168px; }
.t2 { padding-left: 12px; width: 103px; border-bottom: 3px solid #e95420; padding-top: 2px; }
.t2 span { letter-spacing: .1px; }
.list { height: 288px; flex: none; margin: 1px 1px 0; border: 1px solid #c4c4c4; background: #fff; }
.row { height: 26px; display: flex; align-items: center; padding-left: 5px; color: #000; letter-spacing: -.15px; }
.row svg + svg { margin: 0 28px 0 11px; }
.row.sel { background: #e95420; color: #fff; }
.actions { height: 34px; flex: none; display: flex; align-items: center; padding: 0 11px 0 11px; gap: 20px; }
.actions .first { margin-left: auto; }
.blend { height: 47px; flex: none; display: flex; align-items: center; justify-content: flex-end; padding: 0 11px 4px 0; gap: 10px; }
.blend label { letter-spacing: .1px; }
.combo { width: 124px; height: 34px; border: 1px solid #c4c4c4; border-radius: 5px; background: #fff; display: flex; align-items: center; justify-content: space-between; padding: 0 11px; letter-spacing: .2px; }
.sliders { margin: 0 1px; border-top: 1px solid #dedede; padding-top: 8px; }
.slide { height: 32px; display: flex; align-items: center; color: #000; }
.slide span { width: 37px; padding-left: 1px; white-space: nowrap; }
.bar { width: 442px; height: 32px; padding: 7px 0 0 5px; line-height: 17px; border-radius: 3px; letter-spacing: .25px; }
.bar.blur { background: #e0e0e0; border: 1px solid #c0c0c0; border-left: 2px solid #9f2b93; padding: 6px 0 0 3px; }
.bar.full { background: #9f2b93; color: #f5e6f4; border-radius: 3px 0 0 3px; }

.palette { height: 34px; flex: none; display: flex; }
.palwrap { width: 1328px; margin-left: 1px; flex: none; }
.swatches { height: 21px; display: flex; overflow: hidden; }
.swatches i { width: 19px; flex: none; }
.palscroll { height: 13px; background: #d4d4d4; border-top: 1px solid #c8c8c8; padding: 3px; }
.palscroll i { display: block; width: 208px; height: 6px; border-radius: 3px; background: #888; }
.palchev { margin: 11px 0 0 14px; }

.status { height: 35px; flex: none; display: flex; align-items: center; }
.pair { display: flex; flex-direction: column; line-height: 17px; flex: none; white-space: nowrap; }
.lab { width: 50px; align-items: flex-end; }
.val { width: 61px; padding-left: 20px; }
.sw { width: 42px; align-items: flex-end; }
.lo { width: 24px; padding-left: 8px; }
.so { width: 118px; }
.ssep { width: 1px; height: 35px; background: #dcdcdc; margin-left: 2px; }
.seye { margin-left: 10px; }
.slock { margin-left: 19px; }
.layersel { margin-left: 10px; width: 300px; height: 33px; flex: none; border: 1px solid #c4c4c4; border-radius: 5px; background: #fff; padding: 7px 11px; }
.msg { margin-left: 12px; width: 314px; padding-bottom: 16px; white-space: nowrap; flex: none; letter-spacing: .17px; }
.s2 { margin-left: 5px; }
.xy { padding-left: 10px; width: 36px; }
.xyv { width: 46px; }
.lz { width: 30px; padding-left: 8px; }
.lr { width: 33px; padding-left: 10px; }
.sz { width: 100px; }
.sr { width: 108px; }
.sz .minus, .sz .plus, .sr .minus, .sr .plus { width: 21px; background-position: 5px 50%, 10px 50%; }
.sz .plus, .sr .plus { width: 23px; }
.sz span { padding-left: 10px; }
.sr span { padding-left: 13px; }

.dock { height: 50px; flex: none; background: #22151f; display: flex; align-items: center; gap: 8px; padding-left: 4px; }
.app { width: 46px; height: 46px; border-radius: 4px; display: flex; align-items: center; justify-content: center; position: relative; }
.app svg { width: 28px; height: 28px; }
.active { background: #4b4047; }
.run::after { content: ""; position: absolute; bottom: 0; left: 21px; width: 4px; height: 4px; border-radius: 50%; background: #e95420; }
.grid { margin: 0 17px 0 auto; }

.ctx { position: absolute; left: 390px; top: 103px; width: 295px; height: 615px; background: #fafafa; border: 1px solid #a8a8a8; border-radius: 5px 5px 4px 4px; box-shadow: 0 1px 3px rgba(0,0,0,.35); padding: 4px 0; }
.ctx hr { border: 0; height: 1px; background: #dcdcdc; margin: 0; }
.mi { height: 25px; padding: 0 9px 0 31px; display: flex; align-items: center; justify-content: space-between; letter-spacing: .16px; }
.mi kbd { font: inherit; color: #8b8b8b; letter-spacing: .35px; margin-right: -1px; }
.wider { letter-spacing: .32px; }
.tight { letter-spacing: 0; }
.dis { color: #9c9c9c; }
.hot { background: #dedede; }
```

FILE: app.js
```
const colors = ("000000 1a1a1a 333333 4d4d4d 666666 808080 999999 b3b3b3 cccccc e6e6e6 ececec f2f2f2 f9f9f9 ffffff " +
  "800000 ff0000 808000 ffff00 008000 00ff00 008080 00ffff 000080 0000ff 800080 ff00ff " +
  "2b0000 550000 800000 aa0000 d40000 ff0000 ff2a2a ff5555 ff8080 ffaaaa ffd5d5 " +
  "280b0b 501616 782121 a02c2c c83737 d35f5f de8787 e9afaf f4d7d7 " +
  "241c1c 483737 6c5353 916f6f ac9393 c8b7b7 e3dbdb " +
  "2b1100 552200 803300 aa4400 d45500 ff6600 ff7f2a ff9955 ffb380 ffccaa ffe6d5 " +
  "28170b 502d16 784421 a05a2c c87137").split(" ");
const swatches = document.getElementById("swatches");
for (const c of colors) {
  const cell = document.createElement("i");
  cell.style.background = "#" + c;
  swatches.append(cell);
}

// Ruler ticks: every tenth is major, every fifth is medium.
const NS = "http://www.w3.org/2000/svg";
function tick(parent, x, y, w, h) {
  const r = document.createElementNS(NS, "rect");
  r.setAttribute("x", x); r.setAttribute("y", y);
  r.setAttribute("width", w); r.setAttribute("height", h);
  document.getElementById(parent).append(r);
}
for (let k = -15; k <= 34; k++) {
  const len = k % 10 === 0 ? 25 : k % 5 === 0 ? 13 : 7;
  tick("hticks", Math.floor(262 + k * 12.04), 156 - len, 1, len);
}
for (let k = -11; k <= 27; k++) {
  const len = k % 10 === 0 ? 18 : k % 5 === 0 ? 10 : 6;
  tick("vticks", 71 - len, Math.floor(290.2 + k * 12.04), len, 1);
}
```
